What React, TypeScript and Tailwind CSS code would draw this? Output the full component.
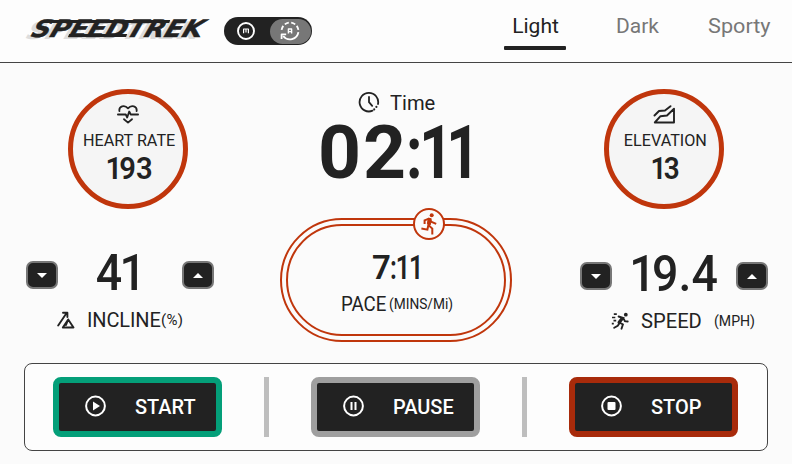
import type { ReactNode } from "react";

const stroke = {
  fill: "none",
  stroke: "currentColor",
  strokeLinecap: "round",
  strokeLinejoin: "round",
} as const;

function Logo() {
  return (
    <div className="relative ml-[33px] mt-[20px] h-[18px] w-[171px] -skew-x-[20deg]">
      <span className="block origin-left scale-x-[1.085] whitespace-nowrap font-['DejaVu_Sans',sans-serif] text-[24px] font-bold italic leading-[18px] [-webkit-text-stroke:0.5px_#222] [text-shadow:-4px_2px_0_#ddd]">
        SPEEDTREK
      </span>
      <span className="absolute left-[8px] top-0 h-[3px] w-[126px] bg-[#222]" />
      <span className="absolute bottom-[1px] left-[38px] h-[3px] w-[58px] bg-[#222]" />
    </div>
  );
}

function ModeToggle() {
  return (
    <div className="ml-[20px] mt-[17px] flex h-[28px] w-[88px] items-center justify-between rounded-full bg-[#222] p-[1.5px] pl-[12px] text-white">
      <svg width="20" height="20" viewBox="0 0 20 20" {...stroke} strokeWidth="1.9">
        <circle cx="10" cy="10" r="8" />
        <path d="M7.6 12.3V8h4.8v4.3M10 8v3.6" strokeWidth="1.2" strokeLinecap="butt" />
      </svg>
      <span className="flex h-[25px] w-[41px] items-center justify-center rounded-full bg-[#777]">
        <svg width="20" height="20" viewBox="0 0 20 20" {...stroke} strokeWidth="1.8" strokeLinecap="butt">
          <path d="M11.2 1.7a8.4 8.4 0 0 1 4 1.7M16.7 4.9a8.4 8.4 0 0 1 1.7 4M18.4 11.2A8.5 8.5 0 0 1 3.2 15M1.6 8.9a8.4 8.4 0 0 1 1.7-4M4.8 3.4a8.4 8.4 0 0 1 4-1.7" />
          <path d="M1.6 18v-4.600h4.600" />
          <path d="M8.400 12.600V8h3.200v4.600M8.400 10.600h3.200" strokeWidth="1.400" />
        </svg>
      </span>
    </div>
  );
}

function HeartIcon() {
  return (
    <svg width="22" height="19" viewBox="0 0 22 19" {...stroke} strokeWidth="1.8">
      <path d="M2.400 6.200C1.600 1.300 7.500-.6 11 3.400c3.500-4 9.400-2.100 8.600 2.800" />
      <path d="M.9 9.500h7.900l1.400 3 2-6 1.500 3h7.400" />
      <path d="M7 14.200 11 17.600l4-3.400" />
    </svg>
  );
}

function ElevationIcon() {
  return (
    <svg width="23" height="19" viewBox="0 0 23 19" {...stroke} strokeWidth="1.9">
      <path d="m1.500 10.500 4.500-4.500 6-.5L17.500 1.200" />
      <path d="m1.800 17.500 5.700-6.300 6.500-.7 7-6.800v13.800z" />
    </svg>
  );
}

function ClockIcon() {
  return (
    <svg width="22" height="22" viewBox="0 0 22 22" {...stroke} strokeWidth="1.8">
      <path d="M20 13A9.300 9.300 0 1 0 14.500 19.700" />
      <path d="M11 6v5.200l3.200 3.600" />
      <path d="M18.400 15.800v.1M16.200 18.300v.1" strokeWidth="2.100" />
    </svg>
  );
}

function RunnerIcon() {
  return (
    <svg width="20" height="24" viewBox="0 0 20 24" {...stroke} strokeLinecap="butt" strokeLinejoin="miter">
      <circle cx="12.700" cy="3.200" r="2" fill="currentColor" stroke="none" />
      <path d="m9.200 6.400 3 .3-.8 6-3-.8z" fill="currentColor" strokeWidth="1" />
      <path d="M5.600 12V8.400l4.200-1.800 2.800 3.200 4.600 2" strokeWidth="2" />
      <path d="m9.700 11.500-1.300 6.200-6-1.200M9.300 13l4 3.600V22.500" strokeWidth="2" />
    </svg>
  );
}

function InclineIcon() {
  return (
    <svg width="18" height="18" viewBox="0 0 18 18" {...stroke} strokeWidth="1.900">
      <path d="M1.200 14.500 9.600 2M6 1.800h4.400v4.200" />
      <path d="M5.800 16.500 11.200 8.500l5.300 8zM11.200 8.500 9 14" />
    </svg>
  );
}

function SpeedIcon() {
  return (
    <svg width="18" height="18" viewBox="0 0 18 18" {...stroke} strokeWidth="1.900" strokeLinejoin="miter">
      <circle cx="14.800" cy="2.700" r="1.900" fill="currentColor" stroke="none" />
      <path d="M7.600 4.500 12.300 6 8.600 10.500l3.300 2-1.400 4.200M12.300 6l1.600 3.200 2.800.300M9 10.500l-2.300 3.200-3.500 2" />
      <path d="M11 6.500 8 10.500" strokeWidth="3" />
      <path d="M2.800 2.200h3M1 5.500h3.300M2.500 8.700h2.700M.8 11.700h2" strokeWidth="1.700" strokeLinecap="butt" />
    </svg>
  );
}

function Dial({ icon, label, value, className }: { icon: ReactNode; label: ReactNode; value: ReactNode; className: string }) {
  return (
    <div className={`flex h-[120px] w-[120px] flex-col items-center rounded-full border-[5px] border-[#c0360c] bg-[#f5f5f5] pt-[11px] ${className}`}>
      <div className="flex h-[19px] items-center">{icon}</div>
      <div className="mt-[8px] flex h-[18px] items-center justify-center whitespace-nowrap pl-[2px] text-[16.5px] leading-[18px]">{label}</div>
      <div className="mt-[3px] flex h-[32px] items-center justify-center whitespace-nowrap pl-[2px] text-[31px] font-semibold leading-[32px]">{value}</div>
    </div>
  );
}

function StepButton({ up, label }: { up?: boolean; label: string }) {
  return (
    <button aria-label={label} className="flex h-[28px] w-[32px] shrink-0 items-center justify-center rounded-[7px] border-2 border-[#777] bg-[#222]">
      <svg width="10" height="5" viewBox="0 0 10 5" fill="white">
        <path d={up ? "M0 5 5 0l5 5z" : "M0 0h10L5 5z"} />
      </svg>
    </button>
  );
}

function ControlButton({ icon, label, className }: { icon: ReactNode; label: string; className: string }) {
  return (
    <button className={`flex h-[60px] w-[169px] items-center rounded-[8px] border-[6px] bg-[#222] text-white ${className}`}>
      <svg className="mb-[2px] ml-[25px] shrink-0" width="23" height="22" viewBox="0 0 23 22" fill="none">
        <circle cx="11.500" cy="11" r="9.400" stroke="currentColor" strokeWidth="2" />
        {icon}
      </svg>
      <span className="ml-[28px] block origin-left scale-x-[0.95] text-[21px] font-medium leading-[24px]">{label}</span>
    </button>
  );
}

export default function App() {
  return (
    <div className="h-[464px] w-[792px] overflow-hidden bg-[#fbfbfb] font-['Roboto',sans-serif] text-[#222]">
      <header className="flex h-[63px] border-b border-[#444] bg-[#fdfdfd]">
        <Logo />
        <ModeToggle />
        <nav className="ml-[192px] flex pt-[12px] text-[21px] leading-[28px]">
          <div className="flex h-[38px] w-[62px] flex-col items-center justify-between">
            <span className="pl-[1px]">Light</span>
            <span className="h-[4px] w-full rounded-[1px] bg-[#222]" />
          </div>
          <span className="ml-[50px] w-[43px] text-center text-[#777]">Dark</span>
          <span className="ml-[48px] w-[65px] text-center text-[#777]"><span className="inline-block scale-x-[1.03]">Sporty</span></span>
        </nav>
      </header>

      <main className="flex h-[300px] pl-[26px]">
        <section className="w-[188px] pt-[26px]">
          <Dial
            className="ml-[42px]"
            icon={<HeartIcon />}
            label={<span className="scale-x-[0.98]">HEART RATE</span>}
            value={<span className="scale-x-[0.94]"><span className="tracking-[-3px]">1</span>93</span>}
          />
          <div className="mt-[52px] flex h-[28px] items-center justify-between">
            <StepButton label="Decrease incline" />
            <span className="mt-[-5px] block scale-x-[0.93] pl-[1px] text-[50px] font-medium leading-[50px]"><span className="tracking-[-3px]">4</span>1</span>
            <StepButton up label="Increase incline" />
          </div>
          <div className="mt-[19px] flex h-[24px] items-center pl-[31px]">
            <InclineIcon />
            <span className="ml-[12px] mt-[1px] w-[74px] whitespace-nowrap text-[21px]"><span className="inline-block origin-left scale-x-[0.95] tracking-[-0.1px]">INCLINE</span></span>
            <span className="mt-[1px] text-[15px] tracking-[0.3px]">(%)</span>
          </div>
        </section>

        <section className="ml-[66px] w-[232px] pt-[26px]">
          <div className="flex h-[26px] items-center pl-[78px]">
            <ClockIcon />
            <span className="ml-[10px] mt-[1px] block origin-left scale-x-[0.96] text-[21px] leading-[26px]">Time</span>
          </div>
          <div className="mt-[2px] flex h-[70px] whitespace-nowrap pl-[38px] text-[75px] font-bold leading-[70px]">
            <span className="block w-[88px]"><span className="tracking-[2px]">0</span><span className="tracking-[-2px]">2</span></span>
            <span className="block origin-left scale-x-[0.78] tracking-[-8.5px]"><span className="tracking-[-4px]">:</span>11</span>
          </div>
          <div className="relative mt-[31px] h-[124px] rounded-full border-2 border-[#c0360c] p-[4px]">
            <div className="flex h-full flex-col rounded-full border-2 border-[#c0360c] pt-[24px]">
              <span className="flex pl-[84px] text-[33px] font-semibold leading-[36px]">
                <span className="block w-[18px]">7</span>
                <span className="block origin-left scale-x-[0.76] tracking-[-1.5px]">:11</span>
              </span>
              <span className="mt-[6px] flex items-center whitespace-nowrap pl-[53px] text-[21px] leading-[24px]">
                <span className="w-[48px]"><span className="inline-block origin-left scale-x-[0.89]">PACE</span></span>
                <span className="w-[65px] text-[14px]"><span className="inline-block origin-left scale-x-[0.98]">(MINS/Mi)</span></span>
              </span>
            </div>
            <span className="absolute left-[131px] top-[-12px] flex h-[32px] w-[32px] items-center justify-center rounded-full border-2 border-[#c0360c] bg-[#fbfbfb] text-[#c0360c]">
              <RunnerIcon />
            </span>
          </div>
        </section>

        <section className="ml-[68px] w-[188px] pt-[26px]">
          <Dial
            className="ml-[24px]"
            icon={<ElevationIcon />}
            label={<span className="scale-x-[0.98]">ELEVATION</span>}
            value={<span className="scale-x-[0.9]"><span className="tracking-[-3px]">1</span>3</span>}
          />
          <div className="mt-[53px] flex h-[28px] items-center justify-between">
            <StepButton label="Decrease speed" />
            <span className="mx-[-4px] mt-[-5px] block scale-x-[0.93] text-[50px] font-medium leading-[50px]"><span className="tracking-[-4px]">1</span>9.4</span>
            <StepButton up label="Increase speed" />
          </div>
          <div className="mt-[19px] flex h-[24px] items-center pl-[31px]">
            <SpeedIcon />
            <span className="ml-[12px] mt-[1px] w-[73px] whitespace-nowrap text-[21px]"><span className="inline-block origin-left scale-x-[0.96]">SPEED</span></span>
            <span className="mt-[1px] block origin-left scale-x-[0.94] text-[15px]">(MPH)</span>
          </div>
        </section>
      </main>

      <footer className="mx-[24px] flex h-[88px] items-center rounded-[8px] border border-[#444] bg-[#fdfdfd] pl-[28px]">
        <ControlButton className="border-[#049f79]" label="START" icon={<path d="M9 6.500v9l7-4.500z" fill="white" />} />
        <span className="ml-[42px] mr-[42px] h-[60px] w-[5px] bg-[#bebebe]" />
        <ControlButton className="border-[#9f9f9f]" label="PAUSE" icon={<path d="M9.500 7v8M13.500 7v8" stroke="white" strokeWidth="2" />} />
        <span className="ml-[42px] mr-[42px] h-[60px] w-[5px] bg-[#bebebe]" />
        <ControlButton className="border-[#a82b0b]" label="STOP" icon={<rect x="7.500" y="7" width="8" height="8" rx="1" fill="white" />} />
      </footer>
    </div>
  );
}
